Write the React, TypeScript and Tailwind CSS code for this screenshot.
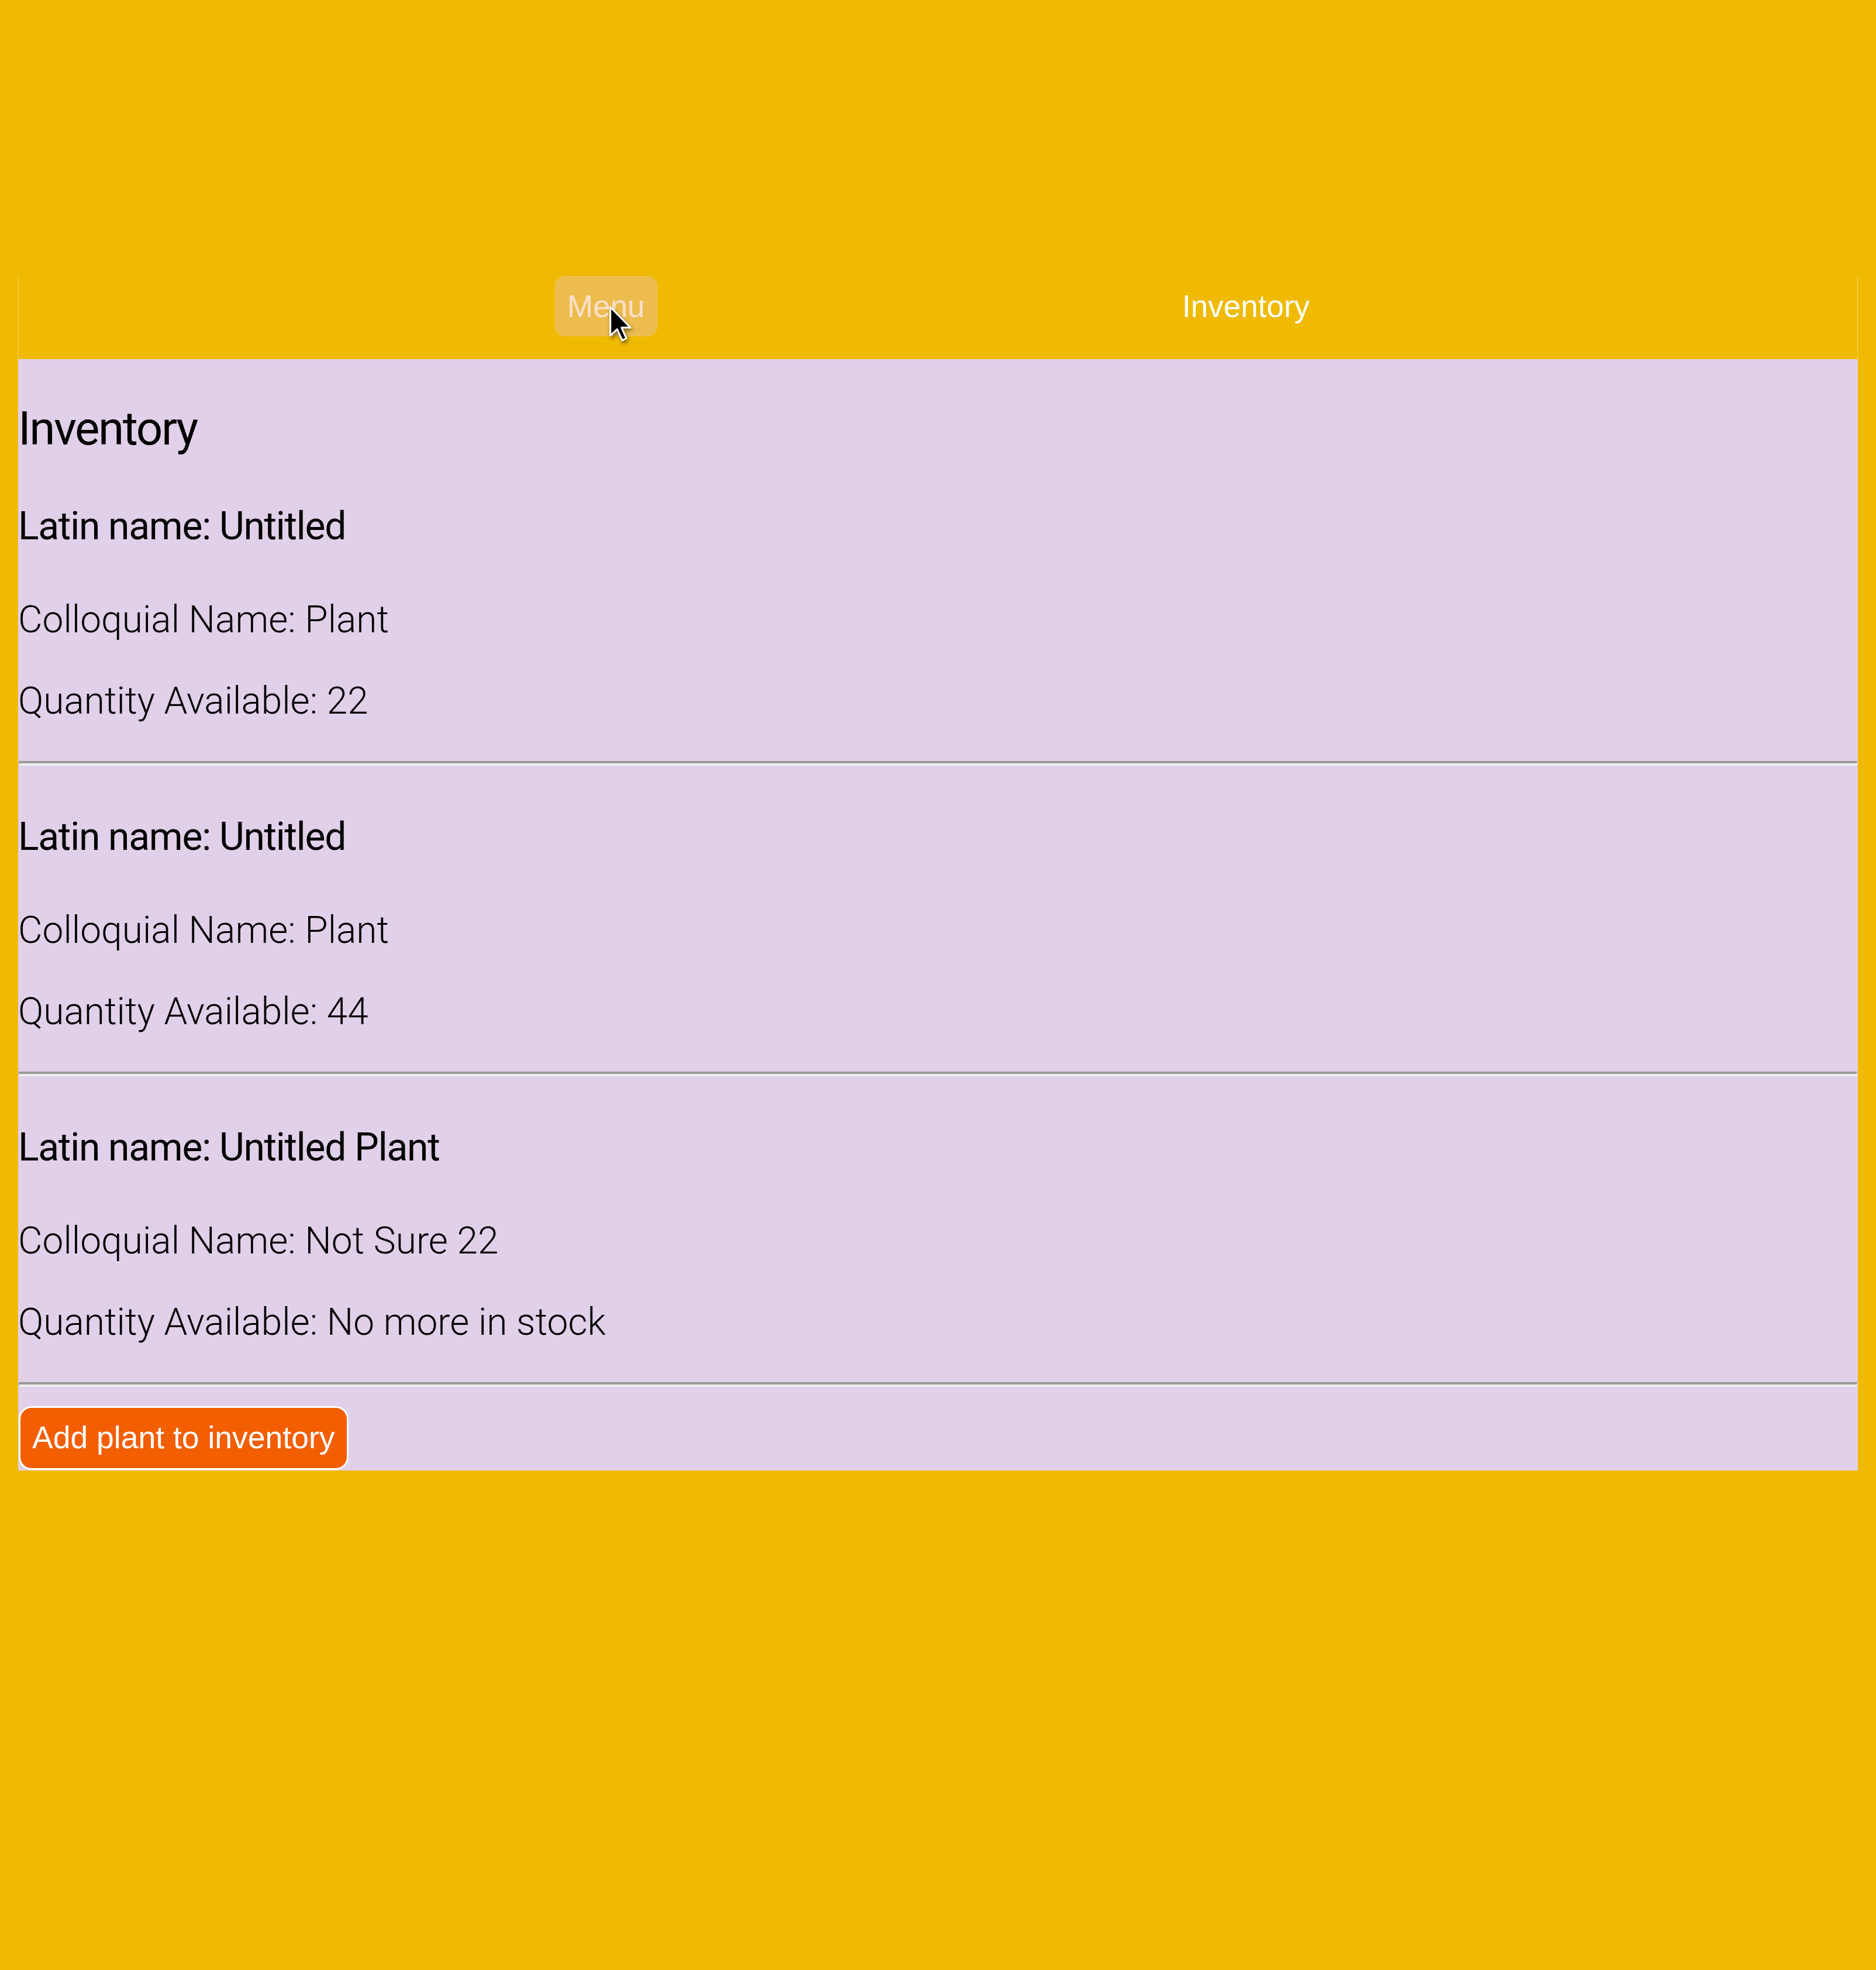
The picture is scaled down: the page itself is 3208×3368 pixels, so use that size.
import React from "react"

interface Plant {
	latin: string
	colloquial: string
	quantity: string
}

const plants: Plant[] = [
	{ latin: "Untitled", colloquial: "Plant", quantity: "22" },
	{ latin: "Untitled", colloquial: "Plant", quantity: "44" },
	{ latin: "Untitled Plant", colloquial: "Not Sure 22", quantity: "No more in stock" },
]

function Cursor() {
	return (
		<svg
			className="absolute left-[90px] top-[49px] h-[64px] w-[44px] drop-shadow-[2px_4px_3px_rgba(0,0,0,0.45)]"
			viewBox="-1 -1 14 21"
		>
			<path
				d="M0 0 L0 16 L3.8 12.4 L6.6 18.6 L9 17.6 L6.3 11.5 L11.3 11.5 Z"
				fill="#000"
				stroke="#fff"
				strokeWidth={1}
				strokeLinejoin="round"
			/>
		</svg>
	)
}

function Header() {
	return (
		<div className="flex h-[143px] items-start gap-[898px] border-x border-[#f4d36e] pl-[917px] pt-px font-['Liberation_Sans',Arial,sans-serif] text-[53px]">
			<button className="relative flex h-[103px] items-center rounded-[17px] border border-[#f0c766] bg-[#ecbc4f] px-[20px] text-[#fde0cd]">
				Menu
				<Cursor />
			</button>
			<div className="flex h-[103px] items-center text-white">Inventory</div>
		</div>
	)
}

function PlantItem({ plant }: { plant: Plant }) {
	return (
		<div className="pt-[79px]">
			<p className="text-[66px] leading-[80px] tracking-[-1.3px] text-black">
				Latin name: {plant.latin}
			</p>
			<p className="mt-[82px] text-[64px] font-light leading-[76px] text-black">
				Colloquial Name: {plant.colloquial}
			</p>
			<p className="mt-[63px] text-[64px] font-light leading-[76px] text-black">
				Quantity Available: {plant.quantity}
			</p>
			<div className="mb-[3px] ml-px mr-px mt-[64px] h-[8px] border-x border-y-4 border-l-[#9a9a9a] border-r-[#eeeeee] border-t-[#9a9a9a] border-b-[#eeeeee]" />
		</div>
	)
}

export default function App() {
	return (
		<div className="min-h-screen bg-[#efba00] px-[31px] pt-[471px]">
			<Header />
			<div className="bg-[#e1d0e9] pb-px font-['Roboto',sans-serif]">
				<h1 className="pt-[71px] text-[80px] leading-[96px] tracking-[-2.4px] text-black">
					Inventory
				</h1>
				{plants.map((plant, i) => (
					<PlantItem key={i} plant={plant} />
				))}
				<button className="ml-px mt-[30px] h-[109px] rounded-[22px] border-[3px] border-white bg-[#f25e00] px-[20px] font-['Liberation_Sans',Arial,sans-serif] text-[53.5px] text-white">
					Add plant to inventory
				</button>
			</div>
		</div>
	)
}
